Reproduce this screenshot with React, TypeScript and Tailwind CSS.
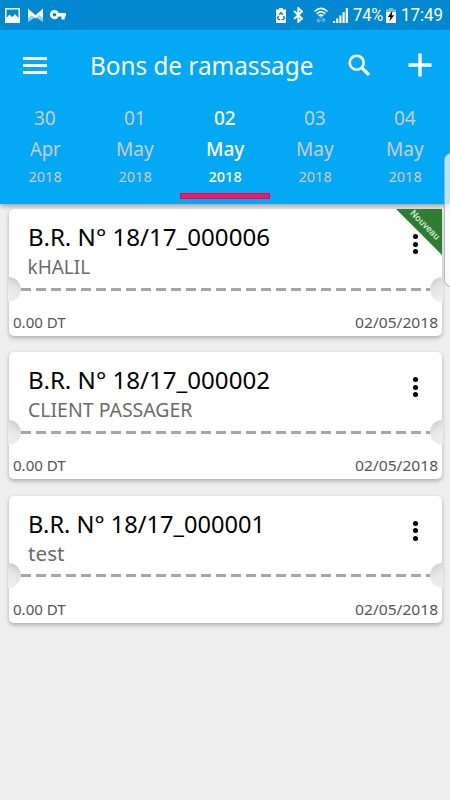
import { useLayoutEffect, useRef } from "react";
import type { ReactNode } from "react";

/* A single line of text stretched to an exact width. */
function Fit({ width, children }: { width: number; children: ReactNode }) {
  const ref = useRef<HTMLSpanElement>(null);
  useLayoutEffect(() => {
    const el = ref.current;
    if (!el) return;
    el.style.transform = "none";
    el.style.transform = `scaleX(${width / el.offsetWidth})`;
  }, [width, children]);
  return (
    <span className="block whitespace-nowrap" style={{ width }}>
      <span ref={ref} className="inline-block origin-left">
        {children}
      </span>
    </span>
  );
}

function StatusBar() {
  return (
    <div className="flex h-[30px] items-center bg-[#0288d1] font-['Roboto',sans-serif] text-[18.5px] text-white">
      <svg className="ml-[5px] h-[15px] w-[15px]" viewBox="0 0 15 15" fill="currentColor">
        <path fillRule="evenodd" d="M1 0h13a1 1 0 0 1 1 1v13a1 1 0 0 1-1 1H1a1 1 0 0 1-1-1V1a1 1 0 0 1 1-1zM1.500 1.500v8.500L4.500 6.500l2.500 2.500 1.500-1 1.500-2 3.500 4V1.500z" />
      </svg>
      <svg className="ml-2 h-[15px] w-[15px]" viewBox="0 0 15 15">
        <path d="M0 1l7.500 6L15 1v13l-7.500-5L0 14z" fill="#9bd0ee" />
        <path d="M0 .5l7.500 7 7.500-7V10l-3.500-3-4 3.500L3.500 7 0 10z" fill="#fff" />
      </svg>
      <svg className="ml-[7px] h-[10px] w-4" viewBox="0 0 16 10" fill="currentColor">
        <path fillRule="evenodd" d="M4.500 0a4.500 4.500 0 0 1 4.200 3H16v3.500h-1.300V9.500h-3.200v-3H8.700A4.600 4.600 0 1 1 4.500 0zm0 3a1.800 1.800 0 1 0 0 3.600 1.800 1.800 0 0 0 0-3.600z" />
      </svg>
      <svg className="ml-[210px] h-[15px] w-[10px]" viewBox="0 0 10 15">
        <path d="M3 0h4v1.500h3V15H0V1.500h3z" fill="#fff" />
        <path d="M3.300 6.800L5 4.500l1.700 2.300M7.500 8l1 2.200-1.500 1.500H5.700M2.500 8l-1 2.200L3 11.700h1.300" stroke="#0277bd" strokeWidth="1.300" fill="none" />
      </svg>
      <svg className="ml-[7px] h-4 w-[11px]" viewBox="0 0 11 16" fill="none" stroke="currentColor" strokeWidth="1.800">
        <path d="M1 4l8 7.500L5.300 15V1L9 4.500 1 12" />
      </svg>
      <svg className="ml-[10px] h-4 w-[14px]" viewBox="0 0 14 16" fill="none" stroke="currentColor" strokeWidth="1.600">
        <path d="M.6 4.500Q7-1.700 13.400 4.500M2.700 6.800Q7 2.700 11.300 6.800M4.700 9Q7 6.700 9.300 9" />
        <circle cx="7" cy="10" r=".8" fill="currentColor" stroke="none" />
        <path d="M4.500 11v4M2.500 13l2 2 2-2M9.500 15.500v-4M7.500 13.500l2-2 2 2" stroke="#65b8e5" strokeWidth="1.200" />
      </svg>
      <svg className="ml-[5px] h-[15px] w-[15px]" viewBox="0 0 15 15" fill="currentColor">
        <path d="M0 13h2.200v2H0zM3.100 10.500h2.200V15H3.100zM6.300 7.500h2.200V15H6.300zM9.500 4h2.200v11H9.500zM12.700 0H15v15h-2.300z" />
      </svg>
      <div className="mt-[2px] ml-[5px]">
        <Fit width={30}>74%</Fit>
      </div>
      <svg className="ml-[3px] h-[15px] w-[10px]" viewBox="0 0 10 15">
        <path d="M3 0h4v1.500h3V4H0V1.500h3z" fill="#78bfe6" />
        <path d="M0 4h10v11H0z" fill="#fff" />
        <path d="M6.500 2.500L1.800 9h2.500L3.300 13.500 8.200 7.300H5.700z" fill="#111" />
      </svg>
      <div className="mt-[2px] ml-[5px]">
        <Fit width={42}>17:49</Fit>
      </div>
    </div>
  );
}

function AppBar() {
  return (
    <div className="flex h-[70px] items-center text-white">
      <div className="mt-px ml-[23px] flex w-6 flex-col gap-1">
        <div className="h-[3px] bg-white" />
        <div className="h-[3px] bg-white" />
        <div className="h-[3px] bg-white" />
      </div>
      <h1 className="mt-px ml-[43px] text-[24.5px] leading-[70px]">
        <Fit width={223}>Bons de ramassage</Fit>
      </h1>
      <svg className="ml-[35px] h-[23px] w-[23px]" viewBox="0 0 23 23" fill="none" stroke="currentColor">
        <circle cx="8.700" cy="8.700" r="7" strokeWidth="2.600" />
        <path d="M13.700 13.700l7.300 7.300" strokeWidth="3.200" />
      </svg>
      <svg className="ml-[37px] h-6 w-6" viewBox="0 0 24 24" stroke="currentColor" strokeWidth="3.400">
        <path d="M12 .5v23M.5 12h23" />
      </svg>
    </div>
  );
}

const days = [
  { day: "30", month: "Apr", mw: 31 },
  { day: "01", month: "May", mw: 38 },
  { day: "02", month: "May", mw: 38 },
  { day: "03", month: "May", mw: 38 },
  { day: "04", month: "May", mw: 38 },
];

function DayTabs() {
  return (
    <div className="grid h-[104px] grid-cols-5">
      {days.map((d, i) => (
        <div
          key={d.day}
          className={`flex flex-col items-center pt-[3px] text-[19px] ${
            i === 2 ? "font-medium text-white" : "text-[#cccccc]"
          }`}
        >
          <div className="leading-[31px]">
            <Fit width={22}>{d.day}</Fit>
          </div>
          <div className="leading-[30px]">
            <Fit width={d.mw}>{d.month}</Fit>
          </div>
          <div className="text-[14.500px] leading-[25px]">
            <Fit width={33}>2018</Fit>
          </div>
          {i === 2 && <div className="mt-[4px] h-[6px] w-full border border-[#f50057] bg-[#e91e63]" />}
        </div>
      ))}
    </div>
  );
}

type Ticket = { title: string; tw: number; client: string; cw: number; isNew?: boolean };

const tickets: Ticket[] = [
  { title: "B.R. N° 18/17_000006", tw: 242, client: "kHALIL", cw: 63, isNew: true },
  { title: "B.R. N° 18/17_000002", tw: 242, client: "CLIENT PASSAGER", cw: 164 },
  { title: "B.R. N° 18/17_000001", tw: 237, client: "test", cw: 37 },
];

function TicketCard({ title, tw, client, cw, isNew }: Ticket) {
  return (
    <article className="relative h-[127px] rounded-[5px] bg-white shadow-[0_2px_4px_rgba(0,0,0,0.28)]">
      <div className="flex h-[72px] justify-between pt-[13px] pl-[18.500px]">
        <div>
          <h2 className="text-[24px] leading-[30px] text-black">
            <Fit width={tw}>{title}</Fit>
          </h2>
          <p className="text-[19px] leading-[31px] text-[#6b6b6b]">
            <Fit width={cw}>{client}</Fit>
          </p>
        </div>
        <div className="mt-3 mr-[24.500px] flex flex-col gap-[2.500px]">
          <div className="h-[5px] w-[5px] rounded-full bg-black" />
          <div className="h-[5px] w-[5px] rounded-full bg-black" />
          <div className="h-[5px] w-[5px] rounded-full bg-black" />
        </div>
      </div>
      <div className="-mx-px -mt-[4px] flex h-6 items-center">
        <div className="h-[25px] w-[13px] rounded-r-full bg-[linear-gradient(215deg,#c6c6c6_10%,#e6e6e6_45%,#ececec_80%)]" />
        <div className="h-[3px] flex-1 bg-[repeating-linear-gradient(90deg,#a6a6a6_0_10px,transparent_10px_15px)]" />
        <div className="h-[25px] w-[13px] rounded-l-full bg-[linear-gradient(145deg,#cacaca_10%,#e6e6e6_45%,#ececec_80%)]" />
      </div>
      <div className="mt-[9px] flex justify-between pr-[4.500px] pl-[4px] text-[14.500px] leading-[24px] text-[#555555]">
        <Fit width={53}>0.00 DT</Fit>
        <Fit width={83}>02/05/2018</Fit>
      </div>
      {isNew && (
        <div className="absolute top-0 right-0 h-[46px] w-[46px] bg-[#2e7d32] [clip-path:polygon(0_0,100%_0,100%_100%)]">
          <span className="absolute top-[10px] left-[9px] w-10 rotate-45 text-center font-['Roboto',sans-serif] text-[9.500px] leading-[12px] font-medium text-[#d5ead6]">
            Nouveau
          </span>
        </div>
      )}
    </article>
  );
}

export default function App() {
  return (
    <div className="relative h-[800px] w-[450px] overflow-hidden bg-[#eeeeee] font-['Noto_Sans',sans-serif]">
      <header className="relative bg-[#03a9f4] shadow-[0_2px_5px_rgba(0,0,0,0.35)]">
        <StatusBar />
        <AppBar />
        <DayTabs />
      </header>
      <main className="flex flex-col gap-[16.400px] pt-[5px] pr-2 pl-[9px]">
        {tickets.map((t) => (
          <TicketCard key={t.title} {...t} />
        ))}
      </main>
      <div className="absolute top-[153px] -right-2 h-[134px] w-[14px] rounded-l-[7px] border border-[#8a9196]/60 bg-white/70" />
    </div>
  );
}
